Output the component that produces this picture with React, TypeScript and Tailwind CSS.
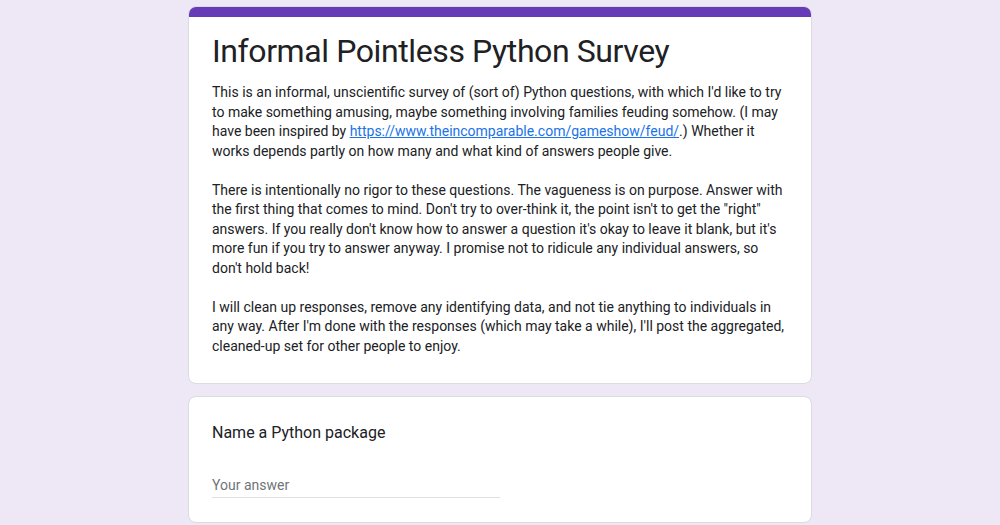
export default function App() {
  const font = { fontFamily: 'Roboto, "Noto Sans", Arial, sans-serif' };
  return (
    <div className="min-h-[525px] w-full bg-[#ede7f6] pt-[6px] pb-6" style={font}>
      <div className="mx-auto flex w-[624px] flex-col gap-[12px]">
        <div className="overflow-hidden rounded-[8px] border border-[#dadce0] bg-white">
          <div className="h-[10px] bg-[#673ab7]" />
          <div className="px-[23px] pt-[14px] pb-[27px]">
            <div className="text-[32px] leading-[40px] tracking-[-0.4px] text-[#202124]">
              Informal Pointless Python Survey
            </div>
            <div className="mt-[12px] text-[14px] leading-[19.5px] text-[#202124]">
              <p>
                This is an informal, unscientific survey of (sort of) Python questions, with which I'd like to try
                to make something amusing, maybe something involving families feuding somehow. (I may have been
                inspired by{' '}
                <a href="#" className="text-[#1a73e8] underline">
                  https://www.theincomparable.com/gameshow/feud/
                </a>
                .) Whether it works depends partly on how many and what kind of answers people give.
              </p>
              <p className="mt-[19.5px]">
                There is intentionally no rigor to these questions. The vagueness is on purpose. Answer with the
                first thing that comes to mind. Don't try to over-think it, the point isn't to get the "right"
                answers. If you really don't know how to answer a question it's okay to leave it blank, but it's
                more fun if you try to answer anyway. I promise not to ridicule any individual answers, so don't
                hold back!
              </p>
              <p className="mt-[19.5px]">
                I will clean up responses, remove any identifying data, and not tie anything to individuals in any
                way. After I'm done with the responses (which may take a while), I'll post the aggregated,
                cleaned-up set for other people to enjoy.
              </p>
            </div>
          </div>
        </div>
        <div className="rounded-[8px] border border-[#dadce0] bg-white px-[23px] pt-[24px] pb-[24px]">
          <div className="text-[16px] leading-[24px] text-[#202124]">Name a Python package</div>
          <div className="mt-[30px] w-[288px] border-b border-[#e0e0e0] pb-[2px] text-[14px] leading-[20px] text-[#70757a]">
            Your answer
          </div>
        </div>
      </div>
    </div>
  );
}
